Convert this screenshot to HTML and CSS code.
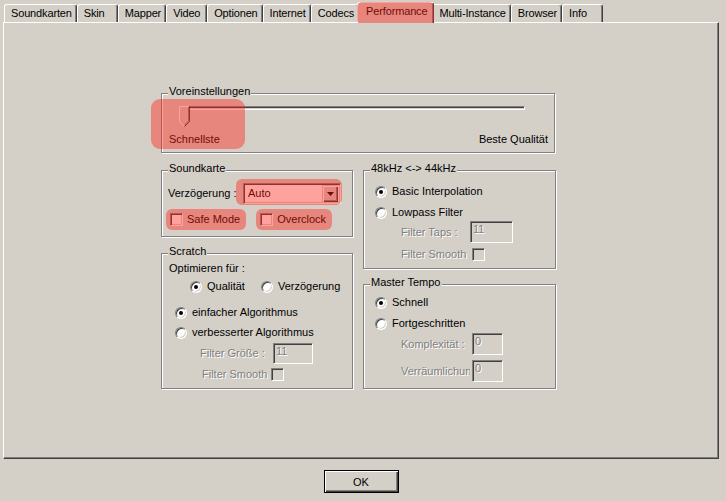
FILE: index.html
```html
<!DOCTYPE html>
<html lang="de">
<head>
  <meta charset="UTF-8"/>
  <title>Optionen - Performance</title>
  <link rel="stylesheet" href="styles.css">
</head>
<body>
  <div class="tabs">
    <div class="tab">Soundkarten</div>
    <div class="tab">Skin</div>
    <div class="tab">Mapper</div>
    <div class="tab">Video</div>
    <div class="tab">Optionen</div>
    <div class="tab">Internet</div>
    <div class="tab">Codecs</div>
    <div class="tab is-active mark">Performance</div>
    <div class="tab">Multi-Instance</div>
    <div class="tab">Browser</div>
    <div class="tab">Info</div>
  </div>

  <div class="panel">
    <div class="settings">

      <!-- presets slider -->
      <div class="group presets">
        <span class="legend">Voreinstellungen</span>
        <div class="slider">
          <div class="slider-track"></div>
          <svg class="slider-thumb" width="11" height="21" viewBox="0 0 11 21">
            <polygon points="0,0 11,0 11,16 5.5,21 0,16" fill="#d4d0c8"/>
            <path d="M0.5 16 V0.5 H10" stroke="#fff" fill="none"/>
            <path d="M0.5 15.5 L5 20" stroke="#fff" fill="none"/>
            <path d="M10.5 0 V15.5 L5.5 20.5" stroke="#404040" fill="none"/>
            <path d="M9.5 1 V15 L5.5 19" stroke="#808080" fill="none"/>
          </svg>
        </div>
        <div class="slider-labels">
          <span>Schnellste</span>
          <span>Beste Qualität</span>
        </div>
        <span class="mark-preset"></span>
      </div>

      <div class="column">
        <!-- SOUNDKARTE -->
        <div class="group soundcard">
          <span class="legend">Soundkarte</span>
          <div class="latency">
            <span>Verzögerung :</span>
            <div class="combo mark-combo">
              <span class="combo-value">Auto</span>
              <span class="combo-button">
                <svg width="7" height="4" viewBox="0 0 7 4"><polygon points="0,0 7,0 3.5,4" fill="#000"/></svg>
              </span>
            </div>
          </div>
          <div class="check-row">
            <label class="check mark"><span class="box"></span>Safe Mode</label>
            <label class="check mark"><span class="box"></span>Overclock</label>
          </div>
        </div>

        <!-- SCRATCH -->
        <div class="group scratch">
          <span class="legend">Scratch</span>
          <div class="line">Optimieren für :</div>
          <div class="pair">
            <div class="opt"><span class="radio is-on"></span>Qualität</div>
            <div class="opt"><span class="radio"></span>Verzögerung</div>
          </div>
          <div class="opt algo-simple"><span class="radio is-on"></span>einfacher Algorithmus</div>
          <div class="opt algo-better"><span class="radio"></span>verbesserter Algorithmus</div>
          <div class="sub sub-size">
            <span class="sub-label">Filter Größe :</span>
            <span class="num">11</span>
          </div>
          <div class="sub sub-smooth">
            <span class="sub-label">Filter Smooth</span>
            <span class="box is-disabled"></span>
          </div>
        </div>
      </div>

      <div class="column">
        <!-- 48kHz -> 44kHz -->
        <div class="group resample">
          <span class="legend">48kHz &lt;-&gt; 44kHz</span>
          <div class="opt"><span class="radio is-on"></span>Basic Interpolation</div>
          <div class="opt"><span class="radio"></span>Lowpass Filter</div>
          <div class="sub sub-taps">
            <span class="sub-label">Filter Taps :</span>
            <span class="num">11</span>
          </div>
          <div class="sub sub-smooth">
            <span class="sub-label">Filter Smooth</span>
            <span class="box is-disabled"></span>
          </div>
        </div>

        <!-- MASTER TEMPO -->
        <div class="group tempo">
          <span class="legend">Master Tempo</span>
          <div class="opt"><span class="radio is-on"></span>Schnell</div>
          <div class="opt"><span class="radio"></span>Fortgeschritten</div>
          <div class="sub sub-complex">
            <span class="sub-label">Komplexität :</span>
            <span class="num">0</span>
          </div>
          <div class="sub sub-space">
            <span class="sub-label">Verräumlichung</span>
            <span class="num">0</span>
          </div>
        </div>
      </div>

    </div>
  </div>

  <div class="footer">
    <button class="btn-ok">OK</button>
  </div>
</body>
</html>
```

FILE: styles.css
```css
:root { --mark: rgba(255, 30, 20, 0.42); }
body { margin:0; background:#d4d0c8; color:#000; font:11px/13px "Liberation Sans", Arial, sans-serif; }

/* tab strip */
.tabs { display:flex; align-items:flex-end; height:22px; padding-left:4px; }
.tab {
  box-sizing:border-box; height:18px; min-width:41px;
  padding:0 4px 0 6px; line-height:17px; white-space:nowrap;
  letter-spacing:-0.15px;
  border:1px solid; border-bottom:none;
  border-color:#fff #404040 #fff #fff;
  border-radius:3px 3px 0 0;
  box-shadow:inset -1px 0 #808080;
}
.tab.is-active {
  position:relative; z-index:1;
  height:21px; margin:0 -2px -1px; padding:0 6px 0 8px;
  background:#d4d0c8;
}

/* highlight overlays */
.mark { position:relative; }
.mark::after {
  content:''; position:absolute; inset:0;
  background:var(--mark); border-radius:6px; pointer-events:none;
}
.tab.mark::after { inset:-1px -1px 0 -1px; border-radius:5px 5px 3px 3px; }

.panel {
  box-sizing:border-box; width:716px; height:437px; margin-left:3px;
  border:1px solid; border-color:#fff #404040 #404040 #fff;
  box-shadow:inset -1px -1px #808080;
}
.settings {
  display:grid; grid-template-columns:192px 193px;
  column-gap:10px; row-gap:17px;
  width:395px; margin:70px 0 0 157px;
}
.column { display:flex; flex-direction:column; gap:16px; }
.column + .column { gap:15px; }

/* etched group box */
.group {
  position:relative; box-sizing:border-box;
  border:1px solid #808080;
  box-shadow:inset 1px 1px #fff, 1px 1px #fff;
}
.legend {
  position:absolute; top:-9px; left:6px;
  padding:0 1px; background:#d4d0c8; white-space:nowrap;
}

/* presets */
.presets { grid-column:1 / -1; width:394px; }
.slider { position:relative; height:21px; margin:12px 29px 0 17px; }
.slider-track {
  box-sizing:border-box; height:4px; margin:6px 0 0 4px;
  border:1px solid; border-color:#808080 #fff #fff #808080;
  background:linear-gradient(#404040 1px, #d4d0c8 1px);
}
.slider-thumb { position:absolute; left:0; top:0; }
.slider-labels { display:flex; justify-content:space-between; margin-top:6px; padding:0 6px 6px 7px; }
.mark-preset {
  position:absolute; left:-11px; top:5px; width:94px; height:50px;
  background:var(--mark); border-radius:9px;
}

/* soundkarte */
.latency { display:flex; align-items:center; justify-content:space-between; padding:12px 11px 0 6px; }
.combo {
  position:relative; box-sizing:border-box; display:flex; align-items:center;
  width:98px; height:21px; padding:2px; background:#fff;
  border:1px solid; border-color:#808080 #fff #fff #808080;
  box-shadow:inset 1px 1px #404040, inset -1px -1px #d4d0c8;
}
.combo-value { flex:1; padding-left:2px; }
.combo-button {
  display:flex; align-items:center; justify-content:center;
  width:16px; height:17px; background:#d4d0c8;
  box-shadow:inset 1px 1px #d4d0c8, inset 2px 2px #fff, inset -1px -1px #404040, inset -2px -2px #808080;
}
.mark-combo::after {
  content:''; position:absolute; left:-8px; top:-5px; right:-2px; bottom:-2px;
  background:var(--mark); border-radius:6px;
}
.check-row { display:flex; gap:10px; padding:5px 0 6px 4px; }
.check { display:inline-flex; align-items:center; gap:4px; padding:4px 6px 4px 4px; }

/* controls */
.box, .radio {
  flex:none; box-sizing:border-box; background:#fff;
  border:1px solid; border-color:#808080 #fff #fff #808080;
  box-shadow:inset 1px 1px #404040, inset -1px -1px #d4d0c8;
}
.box { width:13px; height:13px; }
.box.is-disabled { background:#d4d0c8; }
.radio { position:relative; width:12px; height:12px; border-radius:50%; }
.radio.is-on::after {
  content:''; position:absolute; left:3px; top:3px;
  width:4px; height:4px; border-radius:50%; background:#000;
}
.opt { display:flex; align-items:center; gap:5px; height:13px; white-space:nowrap; }
.sub { display:flex; align-items:center; padding-left:26px; }
.sub-label {
  flex:none; width:69px; overflow:hidden; white-space:nowrap;
  color:#808080; text-shadow:1px 1px #fff;
}
.num {
  box-sizing:border-box; height:22px; padding:1px 0 0 2px;
  color:#808080; text-shadow:1px 1px #fff; background:#d4d0c8;
  border:1px solid; border-color:#808080 #fff #fff #808080;
  box-shadow:inset 1px 1px #404040, inset -1px -1px #d4d0c8;
}

/* 48kHz */
.resample { padding:14px 0 7px 11px; }
.resample .opt + .opt { margin-top:8px; }
.sub-taps { margin-top:2px; }
.sub-taps .num { width:43px; }
.resample .sub-smooth { margin-top:5px; height:13px; }
.sub-smooth .box { margin-left:2px; }

/* master tempo */
.tempo { padding:11px 0 6px 11px; }
.tempo .opt + .opt { margin-top:8px; }
.sub-complex { margin-top:3px; }
.sub-space { margin-top:5px; }
.tempo .num { width:31px; margin-left:2px; }

/* scratch */
.scratch { padding:8px 0 7px 7px; }
.pair { display:flex; gap:16px; margin-top:5px; padding-left:21px; }
.algo-simple { margin-top:13px; padding-left:6px; }
.algo-better { margin-top:7px; padding-left:6px; }
.sub-size { margin-top:4px; padding-left:31px; }
.sub-size .sub-label { width:73px; }
.sub-size .num { width:40px; height:21px; }
.scratch .sub-smooth { margin-top:4px; padding-left:33px; height:13px; }
.scratch .sub-smooth .box { margin-left:0; }

/* footer */
.footer { display:flex; justify-content:center; width:716px; margin-left:3px; padding-top:11px; }
.btn-ok {
  width:75px; height:23px; padding:0;
  font:11px "Liberation Sans", Arial, sans-serif; color:#000;
  background:#d4d0c8; border:1px solid #000;
  box-shadow:inset 1px 1px #fff, inset -1px -1px #404040, inset -2px -2px #808080;
}
```
